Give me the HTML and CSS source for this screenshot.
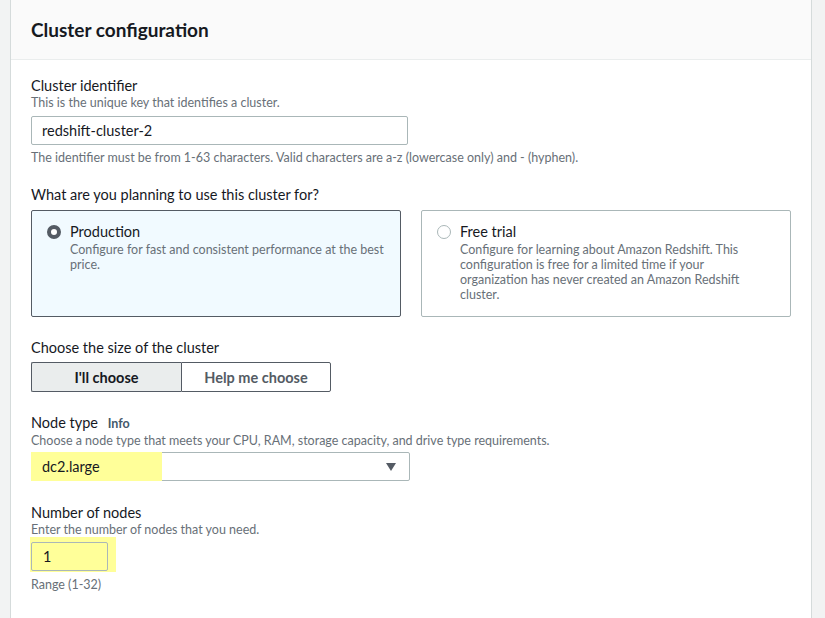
FILE: index.html
```html
<!DOCTYPE html>
<html>
<head>
<meta charset="utf-8">
<link rel="stylesheet" href="styles.css">
</head>
<body>
<div class="page">
  <section class="panel">
    <header class="panel-head">
      <h2>Cluster configuration</h2>
    </header>
    <div class="panel-body">
      <div class="field">
        <div class="label">Cluster identifier</div>
        <div class="desc">This is the unique key that identifies a cluster.</div>
        <div class="input wide">redshift-cluster-2</div>
        <div class="hint">The identifier must be from 1-63 characters. Valid characters are a-z (lowercase only) and - (hyphen).</div>
      </div>

      <div class="field f-tiles">
        <div class="label">What are you planning to use this cluster for?</div>
        <div class="tiles">
          <div class="tile selected">
            <span class="radio on"></span>
            <div class="tile-text">
              <div class="tile-title">Production</div>
              <div class="tile-desc">Configure for fast and consistent performance at the best price.</div>
            </div>
          </div>
          <div class="tile">
            <span class="radio"></span>
            <div class="tile-text">
              <div class="tile-title">Free trial</div>
              <div class="tile-desc narrow">Configure for learning about Amazon Redshift. This configuration is free for a limited time if your organization has never created an Amazon Redshift cluster.</div>
            </div>
          </div>
        </div>
      </div>

      <div class="field f-size">
        <div class="label">Choose the size of the cluster</div>
        <div class="segmented">
          <div class="seg active">I'll choose</div>
          <div class="seg">Help me choose</div>
        </div>
      </div>

      <div class="field f-node">
        <div class="label">Node type <span class="info">Info</span></div>
        <div class="desc tight">Choose a node type that meets your CPU, RAM, storage capacity, and drive type requirements.</div>
        <div class="select">
          <span class="hl-select">dc2.large</span>
          <svg class="caret" width="12" height="10" viewBox="0 0 12 10"><path d="M1 1 L11 1 L6 9 Z" fill="#545b64"/></svg>
        </div>
      </div>

      <div class="field">
        <div class="label">Number of nodes</div>
        <div class="desc">Enter the number of nodes that you need.</div>
        <div class="hl-num"><div class="input num">1</div></div>
        <div class="hint">Range (1-32)</div>
      </div>
    </div>
  </section>
</div>
</body>
</html>
```

FILE: styles.css
```css
html, body {
  margin: 0;
  padding: 0;
}
body {
  background: #f2f3f3;
  font-family: Lato, "Open Sans", sans-serif;
  color: #16191f;
  width: 825px;
  height: 618px;
  overflow: hidden;
}
.page {
  padding: 0 13px 0 10px;
  display: flex;
}
.panel {
  flex: 1;
  background: #fff;
  border-left: 1px solid #d5dbdb;
  border-right: 1px solid #d5dbdb;
  min-height: 618px;
}
.panel-head {
  background: #fafafa;
  border-bottom: 1px solid #eaeded;
  height: 59px;
  padding: 0 20px;
  display: flex;
  align-items: center;
}
.panel-head h2 {
  margin: 0;
  font-size: 19px;
  font-weight: 700;
  color: #16191f;
}
.panel-body {
  padding: 17px 20px 0 20px;
}
.field {
  margin-bottom: 20px;
}
.field.f-tiles {
  margin-bottom: 22px;
}
.field.f-size {
  margin-bottom: 22px;
}
.field.f-node {
  margin-bottom: 23px;
}
.label {
  font-size: 14.5px;
  line-height: 18px;
  color: #16191f;
}
.info {
  font-size: 12.5px;
  font-weight: 700;
  color: #44596b;
  margin-left: 6px;
}
.desc {
  font-size: 12.5px;
  line-height: 16px;
  color: #687078;
  margin-bottom: 5px;
}
.desc.tight {
  margin-bottom: 3px;
}
.hint {
  font-size: 12.5px;
  line-height: 16px;
  color: #687078;
  margin-top: 5px;
}
.input {
  box-sizing: border-box;
  height: 29px;
  border: 1px solid #aab7b8;
  border-radius: 2px;
  font-size: 14.5px;
  line-height: 27px;
  padding: 0 10px;
  background: #fff;
}
.input.wide {
  width: 377px;
}
.tiles {
  display: flex;
  gap: 20px;
  margin-top: 6px;
}
.tile {
  box-sizing: border-box;
  width: 370px;
  height: 107px;
  border: 1px solid #aab7b8;
  border-radius: 2px;
  padding: 13px 15px;
  display: flex;
  gap: 9px;
  background: #fff;
}
.tile.selected {
  background: #f1faff;
  border-color: #545b64;
}
.radio {
  box-sizing: border-box;
  width: 14px;
  height: 14px;
  border-radius: 50%;
  border: 1px solid #aab7b8;
  flex: none;
  margin-top: 1px;
  background: #fff;
}
.radio.on {
  border: 4px solid #545b64;
}
.tile-title {
  font-size: 14.5px;
  line-height: 16px;
}
.tile-desc {
  font-size: 12.5px;
  line-height: 15px;
  color: #687078;
  margin-top: 2px;
}
.tile-desc.narrow {
  max-width: 300px;
}
.segmented {
  display: flex;
  width: 300px;
  margin-top: 5px;
}
.seg {
  box-sizing: border-box;
  width: 150px;
  height: 30px;
  border: 1px solid #545b64;
  font-size: 14.5px;
  font-weight: 700;
  color: #545b64;
  display: flex;
  align-items: center;
  justify-content: center;
  background: #fff;
}
.seg.active {
  background: #eaeded;
  color: #16191f;
  border-right: none;
  border-radius: 2px 0 0 2px;
}
.seg + .seg {
  border-left: 1px solid #545b64;
  border-radius: 0 2px 2px 0;
}
.select {
  box-sizing: border-box;
  width: 379px;
  height: 29px;
  border: 1px solid #aab7b8;
  border-radius: 2px;
  display: flex;
  align-items: center;
  justify-content: space-between;
  padding-right: 12px;
}
.hl-select {
  align-self: stretch;
  margin: -1px 0 -1px -1px;
  width: 120px;
  background: #ffff99;
  font-size: 14.5px;
  display: flex;
  align-items: center;
  padding-left: 11px;
}
.caret {
  display: block;
}
.hl-num {
  display: inline-block;
  background: #ffff99;
  padding: 5px 8px 1px 1px;
  margin: -6px 0 -1px -1px;
}
.input.num {
  width: 77px;
  background: #ffff99;
  padding-left: 11px;
}
.hl-num + .hint {
  margin-top: 6px;
}
```
